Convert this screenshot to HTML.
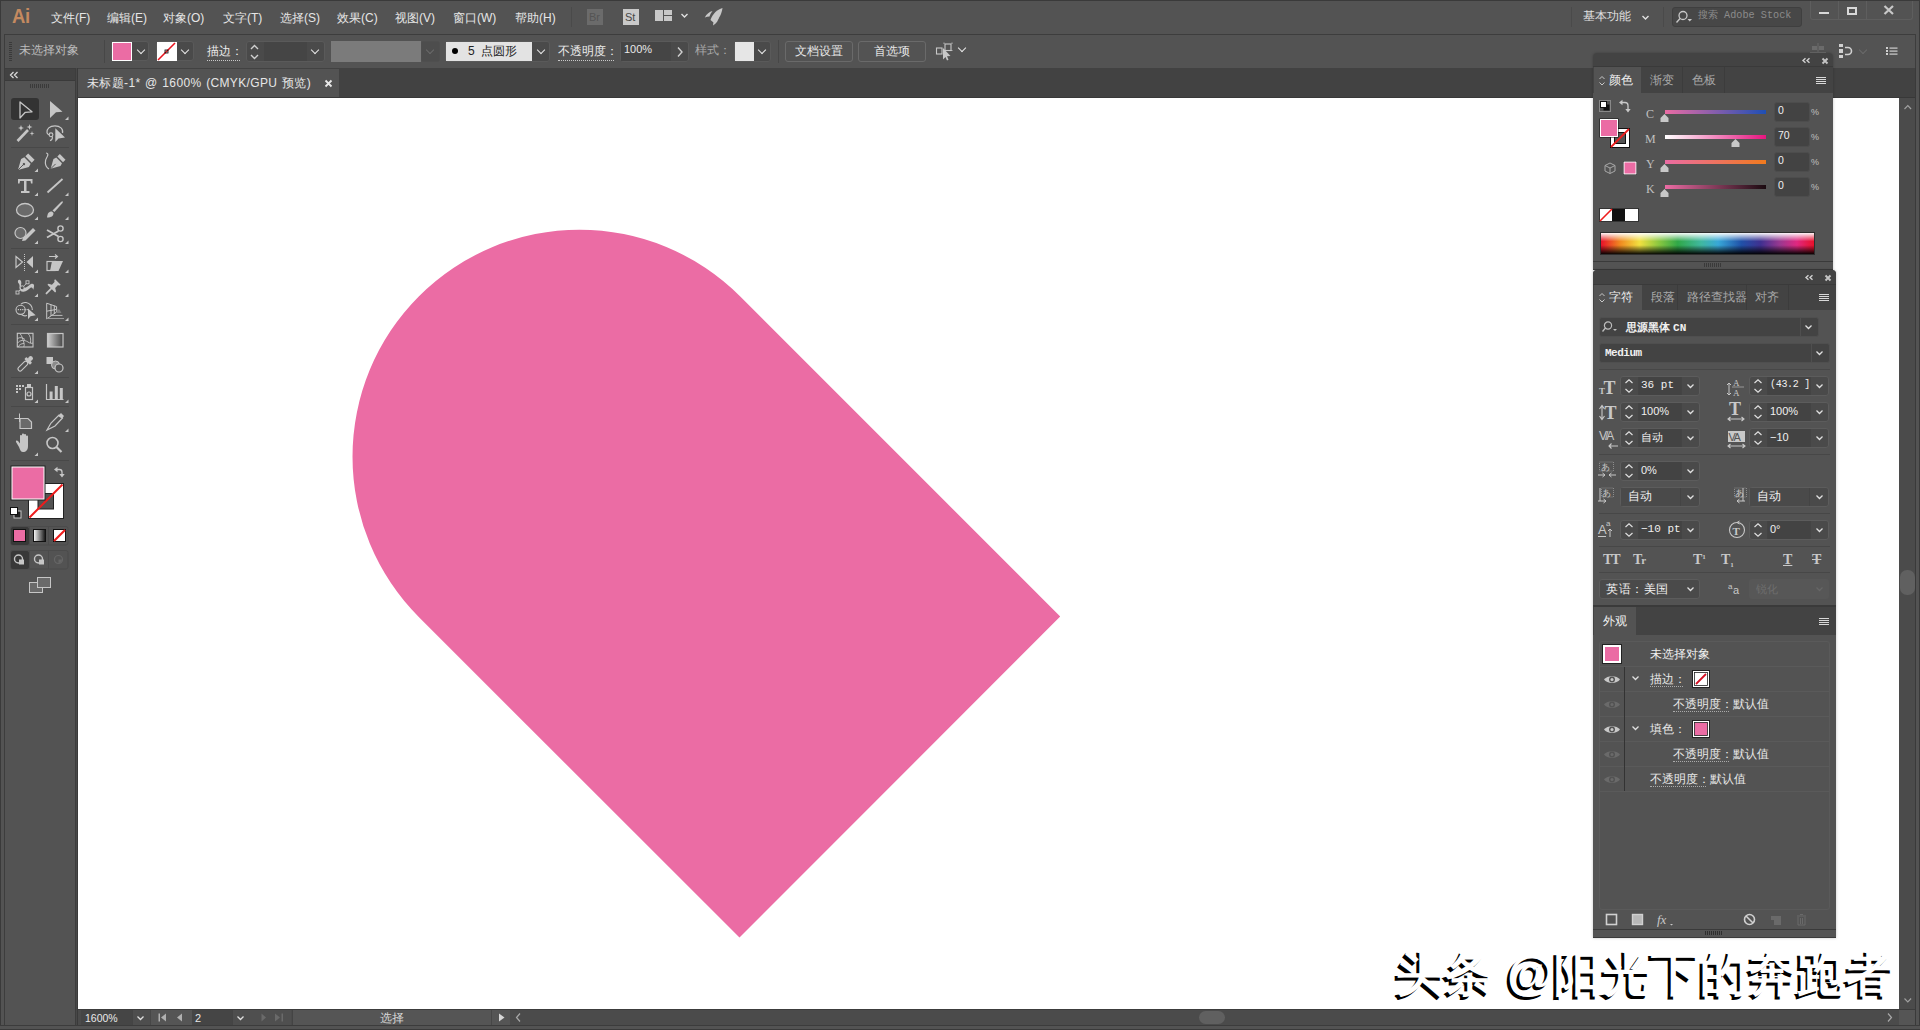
<!DOCTYPE html>
<html><head><meta charset="utf-8">
<style>
*{margin:0;padding:0;box-sizing:border-box}
html,body{width:1920px;height:1030px;overflow:hidden;background:#535353;font-family:"Liberation Sans",sans-serif;color:#d6d6d6;font-size:12px}
.a{position:absolute}
.t{position:absolute;white-space:nowrap;line-height:1}
svg{position:absolute;overflow:visible}
.fld{position:absolute;background:#454545;border:1px solid #5a5a5a;border-radius:3px}
.chev{position:absolute;width:6px;height:6px;border-right:1.5px solid #e6e6e6;border-bottom:1.5px solid #e6e6e6;transform:rotate(45deg)}
</style></head><body>
<!-- window frame -->
<div class="a" style="left:0;top:0;width:1920px;height:1030px;background:#535353;border:1px solid #3a3a3a"></div>

<!-- MENU BAR -->
<div id="menubar">
<div class="t" style="left:12px;top:5px;font-size:21px;font-weight:bold;color:#c48a60;letter-spacing:-0.5px;transform:scaleX(0.88);transform-origin:0 0">Ai</div>
<div class="t" style="left:51px;top:12px;color:#e6e6e6">文件(F)</div>
<div class="t" style="left:107px;top:12px;color:#e6e6e6">编辑(E)</div>
<div class="t" style="left:163px;top:12px;color:#e6e6e6">对象(O)</div>
<div class="t" style="left:223px;top:12px;color:#e6e6e6">文字(T)</div>
<div class="t" style="left:280px;top:12px;color:#e6e6e6">选择(S)</div>
<div class="t" style="left:337px;top:12px;color:#e6e6e6">效果(C)</div>
<div class="t" style="left:395px;top:12px;color:#e6e6e6">视图(V)</div>
<div class="t" style="left:453px;top:12px;color:#e6e6e6">窗口(W)</div>
<div class="t" style="left:515px;top:12px;color:#e6e6e6">帮助(H)</div>
<div class="a" style="left:571px;top:7px;width:1px;height:20px;background:#4a4a4a"></div>
<div class="a" style="left:587px;top:9px;width:16px;height:16px;background:#6b6b6b"></div>
<div class="t" style="left:589px;top:12px;font-size:11px;color:#545454">Br</div>
<div class="a" style="left:623px;top:9px;width:16px;height:16px;background:#c9c9c9"></div>
<div class="t" style="left:625px;top:12px;font-size:11px;color:#474747">St</div>
<div class="a" style="left:655px;top:10px;width:7.5px;height:11px;background:#c8c8c8"></div>
<div class="a" style="left:664px;top:10px;width:8px;height:4.5px;background:#c8c8c8"></div>
<div class="a" style="left:664px;top:16px;width:8px;height:5px;background:#c8c8c8"></div>
<svg style="left:680px;top:12px" width="10" height="8"><path d="M1.5 2 L4.5 5 L7.5 2" fill="none" stroke="#e0e0e0" stroke-width="1.4"/></svg>
<svg style="left:704px;top:7px" width="20" height="20"><path d="M18.5 1 C13 2.5 8.5 7 6.5 13 L9.5 15.5 C14.5 13 17.5 8 18.5 1 Z" fill="#c8c8c8"/><path d="M0.8 10.5 C2.5 7 5.5 4.8 8.5 4 C7 6 6 7.8 5.5 9.5 C4 9.5 2.3 9.8 0.8 10.5 Z" fill="#c8c8c8"/><path d="M9 18.5 C9.2 16.5 9.5 14.5 10 13 C11.8 12.5 13.5 11.5 15 10 C14.5 13 12.5 16.5 9 18.5 Z" fill="#c8c8c8"/></svg>
<div class="a" style="left:1571px;top:7px;width:1px;height:20px;background:#4a4a4a"></div>
<div class="t" style="left:1583px;top:10px;color:#e0e0e0">基本功能</div>
<svg style="left:1641px;top:14px" width="10" height="8"><path d="M1.5 2 L4.5 5 L7.5 2" fill="none" stroke="#e0e0e0" stroke-width="1.4"/></svg>
<div class="a" style="left:1663px;top:7px;width:1px;height:20px;background:#4a4a4a"></div>
<div class="a" style="left:1672px;top:7px;width:130px;height:20px;background:#474747;border:1px solid #3f3f3f;border-radius:3px"></div>
<svg style="left:1675px;top:9px" width="20" height="16"><circle cx="8" cy="6.5" r="4" fill="none" stroke="#c8c8c8" stroke-width="1.3"/><line x1="5" y1="9.5" x2="1.5" y2="13.5" stroke="#c8c8c8" stroke-width="1.4"/><path d="M12.5 10 L17 10 L14.75 12.5 Z" fill="#c8c8c8"/></svg>
<div class="t" style="left:1698px;top:11px;font-size:10.2px;color:#8c8c8c;font-family:'Liberation Mono',monospace">搜索 Adobe Stock</div>
<div class="a" style="left:1810px;top:1px;width:103px;height:19px;border:1px solid #5e5e5e;border-top:none;border-radius:0 0 3px 3px"></div>
<div class="a" style="left:1838px;top:1px;width:1px;height:18px;background:#5e5e5e"></div>
<div class="a" style="left:1866px;top:1px;width:1px;height:18px;background:#5e5e5e"></div>
<div class="a" style="left:1819px;top:12px;width:10px;height:2px;background:#d8d8d8"></div>
<div class="a" style="left:1847px;top:7px;width:10px;height:8px;border:2px solid #d8d8d8"></div>
<svg style="left:1883px;top:5px" width="12" height="10"><path d="M1.5 1 L10 9 M10 1 L1.5 9" stroke="#c8c8c8" stroke-width="2.2"/></svg>
</div>

<!-- CONTROL BAR -->
<div class="a" style="left:4px;top:34px;width:1912px;height:35px;background:#535353;border:1px solid #3d3d3d"></div>
<div class="a" style="left:9px;top:42px;width:3px;height:20px;background:repeating-linear-gradient(#3a3a3a 0 1px,transparent 1px 2px)"></div>
<div class="t" style="left:19px;top:44px;color:#bdbdbd">未选择对象</div>
<div class="a" style="left:104px;top:40px;width:1px;height:23px;background:#474747"></div>
<!-- fill swatch -->
<div class="fld" style="left:111px;top:41px;width:38px;height:20px;background:#4a4a4a"></div>
<div class="a" style="left:112px;top:42px;width:20px;height:19px;background:#fff"></div>
<div class="a" style="left:113px;top:43px;width:18px;height:17px;background:#eb6ca4"></div>
<div class="chev" style="left:138px;top:47px"></div>
<!-- stroke swatch -->
<div class="fld" style="left:156px;top:41px;width:38px;height:20px;background:#4a4a4a"></div>
<div class="a" style="left:157px;top:42px;width:20px;height:19px;background:#fff"></div>
<svg style="left:157px;top:42px" width="20" height="19"><line x1="1" y1="18" x2="18" y2="1" stroke="#e8141e" stroke-width="1.6"/><rect x="8" y="8" width="3" height="3" fill="none" stroke="#000" stroke-width="0.8"/></svg>
<div class="chev" style="left:182px;top:47px"></div>
<div class="t" style="left:207px;top:45px;color:#ececec">描边：</div>
<div class="a" style="left:207px;top:60px;width:33px;height:1px;border-top:1px dotted #c8c8c8"></div>
<div class="fld" style="left:246px;top:41px;width:79px;height:21px;background:#4a4a4a"></div>
<div class="a" style="left:264px;top:42px;width:43px;height:19px;background:#454545"></div>
<svg style="left:249px;top:44px" width="12" height="16"><path d="M2 5 L5.5 1.5 L9 5 M2 11 L5.5 14.5 L9 11" fill="none" stroke="#d0d0d0" stroke-width="1.4"/></svg>
<div class="chev" style="left:312px;top:47px"></div>
<!-- disabled gray -->
<div class="a" style="left:331px;top:41px;width:90px;height:21px;background:#7b7b7b"></div>
<div class="fld" style="left:421px;top:41px;width:19px;height:21px;background:#4d4d4d;border-color:#4f4f4f"></div>
<div class="chev" style="left:427px;top:47px;border-color:#6a6a6a"></div>
<!-- brush -->
<div class="fld" style="left:445px;top:41px;width:105px;height:21px;background:#4a4a4a"></div>
<div class="a" style="left:446px;top:42px;width:86px;height:19px;background:#e3e3e3"></div>
<div class="a" style="left:452px;top:48px;width:6px;height:6px;border-radius:50%;background:#000"></div>
<div class="t" style="left:468px;top:45px;color:#222">5&nbsp; 点圆形</div>
<div class="chev" style="left:538px;top:47px"></div>
<div class="t" style="left:558px;top:45px;color:#ececec">不透明度：</div>
<div class="a" style="left:558px;top:60px;width:56px;height:1px;border-top:1px dotted #c8c8c8"></div>
<div class="fld" style="left:620px;top:41px;width:69px;height:21px;background:#4a4a4a"></div>
<div class="a" style="left:621px;top:42px;width:50px;height:19px;background:#454545"></div>
<div class="t" style="left:624px;top:44px;font-size:11px;color:#e8e8e8">100%</div>
<svg style="left:676px;top:46px" width="8" height="12"><path d="M2 1.5 L6 6 L2 10.5" fill="none" stroke="#d0d0d0" stroke-width="1.4"/></svg>
<div class="t" style="left:695px;top:44px;color:#a8a8a8">样式：</div>
<div class="fld" style="left:734px;top:41px;width:37px;height:21px;background:#4a4a4a"></div>
<div class="a" style="left:735px;top:42px;width:19px;height:19px;background:#e6e6e6"></div>
<div class="chev" style="left:759px;top:47px"></div>
<div class="a" style="left:778px;top:40px;width:1px;height:23px;background:#474747"></div>
<div class="a" style="left:785px;top:41px;width:68px;height:21px;border:1px solid #6a6a6a;border-radius:3px"></div>
<div class="t" style="left:795px;top:45px;color:#e6e6e6">文档设置</div>
<div class="a" style="left:858px;top:41px;width:68px;height:21px;border:1px solid #6a6a6a;border-radius:3px"></div>
<div class="t" style="left:874px;top:45px;color:#e6e6e6">首选项</div>
<svg style="left:934px;top:42px" width="24" height="20"><rect x="2.5" y="6" width="5.5" height="6" fill="none" stroke="#c8c8c8" stroke-width="1.1"/><rect x="11" y="2" width="6" height="6.5" fill="none" stroke="#c8c8c8" stroke-width="1.1"/><path d="M10 0.5 V2 M18 0.5 V2 M9.5 8.5 H11 M17 8.5 H18.5" stroke="#c8c8c8" stroke-width="0.8"/><path d="M9 6 L9 17.5 L11.5 15 L13 18.5 L14.5 17.8 L13 14.3 L16.5 14 Z" fill="#c8c8c8"/></svg>
<div class="chev" style="left:959px;top:45px"></div>
<!-- right side icons -->
<svg style="left:1810px;top:43px" width="18" height="18"><rect x="2" y="3" width="5" height="4" fill="#6b6b6b"/><rect x="9" y="3" width="5" height="4" fill="#6b6b6b"/><line x1="0" y1="9.5" x2="16" y2="9.5" stroke="#6b6b6b"/><line x1="8" y1="0" x2="8" y2="13" stroke="#6b6b6b"/></svg>
<svg style="left:1838px;top:43px" width="18" height="18"><rect x="1" y="1" width="4" height="3" fill="#d0d0d0"/><rect x="1" y="6" width="4" height="4" fill="#d0d0d0"/><rect x="1" y="12" width="4" height="3" fill="#d0d0d0"/><path d="M7 4.5 H10 A3.5 3.5 0 0 1 10 11.5 H7" fill="none" stroke="#d0d0d0" stroke-width="1.6"/></svg>
<div class="chev" style="left:1860px;top:47px;border-color:#6a6a6a"></div>
<svg style="left:1886px;top:47px" width="14" height="10"><g fill="#d0d0d0"><rect x="0" y="0" width="2" height="2"/><rect x="0" y="3" width="2" height="2"/><rect x="0" y="6" width="2" height="2"/><rect x="3.5" y="0.5" width="8" height="1.2"/><rect x="3.5" y="3.5" width="8" height="1.2"/><rect x="3.5" y="6.5" width="8" height="1.2"/></g></svg>

<!-- DOC TAB AREA -->
<div class="a" style="left:78px;top:68px;width:1838px;height:30px;background:#424242;border-bottom:1px solid #383838"></div>
<div class="a" style="left:78px;top:69px;width:261px;height:28px;background:#535353"></div>
<div class="t" style="left:87px;top:77px;color:#e6e6e6;letter-spacing:0.35px;word-spacing:1px">未标题-1* @ 1600% (CMYK/GPU 预览)</div>
<svg style="left:324px;top:79px" width="9" height="9"><path d="M1.5 1.5 L7.5 7.5 M7.5 1.5 L1.5 7.5" stroke="#e8e8e8" stroke-width="1.8"/></svg>

<!-- TOOLBAR -->
<div class="a" style="left:4px;top:68px;width:72px;height:958px;background:#535353;border:1px solid #3d3d3d"></div>
<div class="a" style="left:5px;top:69px;width:70px;height:12px;background:#424242;border-bottom:1px solid #3a3a3a"></div>
<div class="a" style="left:76px;top:68px;width:2px;height:958px;background:#484848;border-right:1px solid #3a3a3a"></div>
<svg style="left:9px;top:71px" width="10" height="8"><path d="M4.5 1 L1.5 4 L4.5 7 M8.5 1 L5.5 4 L8.5 7" fill="none" stroke="#d8d8d8" stroke-width="1.3"/></svg>
<div class="a" style="left:30px;top:84px;width:19px;height:4px;background:repeating-linear-gradient(90deg,#3a3a3a 0 1px,transparent 1px 2px)"></div>
<div class="a" style="left:11px;top:98px;width:28px;height:22px;background:#333333;border-radius:3px"></div>
<svg style="left:0;top:0" width="80" height="600">
<g fill="#c6c6c6" stroke="none">
<!-- corner triangles -->
<path d="M65.0 120.0 L68.5 120.0 L68.5 116.5 Z"/>
<path d="M34.5 172.0 L38.0 172.0 L38.0 168.5 Z"/>
<path d="M34.5 196.0 L38.0 196.0 L38.0 192.5 Z"/><path d="M65.0 196.0 L68.5 196.0 L68.5 192.5 Z"/>
<path d="M34.5 220.0 L38.0 220.0 L38.0 216.5 Z"/><path d="M65.0 220.0 L68.5 220.0 L68.5 216.5 Z"/>
<path d="M34.5 244.0 L38.0 244.0 L38.0 240.5 Z"/><path d="M65.0 244.0 L68.5 244.0 L68.5 240.5 Z"/>
<path d="M34.5 273.0 L38.0 273.0 L38.0 269.5 Z"/><path d="M65.0 273.0 L68.5 273.0 L68.5 269.5 Z"/>
<path d="M34.5 297.0 L38.0 297.0 L38.0 293.5 Z"/><path d="M65.0 297.0 L68.5 297.0 L68.5 293.5 Z"/>
<path d="M34.5 321.0 L38.0 321.0 L38.0 317.5 Z"/><path d="M65.0 321.0 L68.5 321.0 L68.5 317.5 Z"/>
<path d="M34.5 374.0 L38.0 374.0 L38.0 370.5 Z"/>
<path d="M34.5 403.0 L38.0 403.0 L38.0 399.5 Z"/><path d="M65.0 403.0 L68.5 403.0 L68.5 399.5 Z"/>
<path d="M65.0 432.0 L68.5 432.0 L68.5 428.5 Z"/>
<path d="M34.5 456.0 L38.0 456.0 L38.0 452.5 Z"/>
</g>
<!-- separators -->
<g stroke="#484848" stroke-width="1">
<line x1="11" y1="147.5" x2="69" y2="147.5"/><line x1="11" y1="248.5" x2="69" y2="248.5"/>
<line x1="11" y1="324.5" x2="69" y2="324.5"/><line x1="11" y1="377.5" x2="69" y2="377.5"/>
<line x1="11" y1="406.5" x2="69" y2="406.5"/><line x1="11" y1="460.5" x2="69" y2="460.5"/>
</g>
<!-- row1 -->
<path d="M20 102 L32 111.8 L25.3 112.3 L20 118 Z" fill="none" stroke="#c6c6c6" stroke-width="1.3" stroke-linejoin="round"/>
<path d="M50 101 L62.5 111.7 L56 112.2 L50 118 Z" fill="#c6c6c6"/>
<!-- row2 wand -->
<line x1="17.5" y1="141" x2="28" y2="130" stroke="#c6c6c6" stroke-width="2.6"/>
<g fill="#c6c6c6"><path d="M21 125 L21.8 127.3 L24 128 L21.8 128.7 L21 131 L20.2 128.7 L18 128 L20.2 127.3 Z"/><path d="M29.5 124 L30.2 126.3 L32.5 127 L30.2 127.7 L29.5 130 L28.8 127.7 L26.5 127 L28.8 126.3 Z"/><path d="M32 131 L32.6 132.9 L34.5 133.5 L32.6 134.1 L32 136 L31.4 134.1 L29.5 133.5 L31.4 132.9 Z"/></g>
<!-- lasso -->
<path d="M62.5 133 C63.5 129 60 125.8 55 125.8 C49.5 125.8 46.5 129 47 132.5 C47.3 134 48.3 134.8 49.5 134.8" fill="none" stroke="#c6c6c6" stroke-width="1.2"/>
<circle cx="51" cy="134.8" r="1.9" fill="none" stroke="#c6c6c6" stroke-width="1.1"/><path d="M52.2 136.3 C52.8 138.5 51.5 140 50 140.6" fill="none" stroke="#c6c6c6" stroke-width="1.2"/>
<path d="M55.3 128.3 L55.3 142 L58.5 138.5 L65 137.4 Z" fill="#c6c6c6"/>
<!-- row3 pen -->
<g transform="translate(25 163) rotate(45)">
<path d="M0 10 L-5.5 0 L-4.5 -3.5 L4.5 -3.5 L5.5 0 Z" fill="#c6c6c6"/>
<rect x="-4.5" y="-9" width="9" height="4" fill="#c6c6c6"/>
<line x1="0" y1="10" x2="0" y2="2" stroke="#535353" stroke-width="0.9"/>
<circle cx="0" cy="1.5" r="1.2" fill="#535353"/>
</g>
<g transform="translate(57 162.5) rotate(45)">
<path d="M0 9 L-5 0 L-4 -3 L4 -3 L5 0 Z" fill="#c6c6c6"/>
<rect x="-4" y="-8" width="8" height="3.5" fill="#c6c6c6"/>
<line x1="0" y1="9" x2="0" y2="2" stroke="#535353" stroke-width="0.9"/>
</g>
<path d="M49 169 C44 166 45 160 47 157 C48.5 154.5 48 153 46 153" fill="none" stroke="#c6c6c6" stroke-width="1.2"/>
<!-- row4 T -->
<path d="M18 179 H32.5 V183.5 H31 L30.5 181 H26.5 V191 H29.5 V193 H21 V191 H24 V181 H20 L19.5 183.5 H18 Z" fill="#c6c6c6"/>
<line x1="47.5" y1="192.5" x2="62.5" y2="179" stroke="#c6c6c6" stroke-width="1.8"/>
<!-- row5 ellipse -->
<ellipse cx="25" cy="210" rx="8.5" ry="6.5" fill="#6a6a6a" stroke="#c6c6c6" stroke-width="1.3"/>
<path d="M47 217.5 C47.5 213 49 211.5 52 211.5 L53.5 213 C53.5 216 51.5 217.5 47 217.5 Z" fill="#c6c6c6"/>
<path d="M52.5 210.5 L61 202 C62.5 200.5 63.5 201.5 62.5 203 L54.5 212 Z" fill="#c6c6c6"/>
<!-- row6 shaper -->
<circle cx="20.5" cy="233" r="5.5" fill="#6a6a6a" stroke="#c6c6c6" stroke-width="1.2"/>
<path d="M22 241 L23 238 L33 228 L35.5 230.5 L25.5 240.5 Z" fill="#c6c6c6"/>
<g fill="none" stroke="#c6c6c6" stroke-width="1.4"><circle cx="60.5" cy="228.5" r="2.6"/><circle cx="60.5" cy="239" r="2.6"/></g>
<path d="M47 230 L58.5 236.5 M47 237.5 L58.5 231" stroke="#c6c6c6" stroke-width="1.8"/>
<!-- row7 reflect -->
<path d="M16 256.5 L22.5 262 L16 267.5 Z" fill="none" stroke="#c6c6c6" stroke-width="1.2"/>
<line x1="24.5" y1="254" x2="24.5" y2="271" stroke="#c6c6c6" stroke-width="1" stroke-dasharray="1 1"/>
<path d="M33 256 L26.5 262 L33 268 Z" fill="#c6c6c6"/>
<rect x="47" y="261.5" width="8" height="9" fill="none" stroke="#c6c6c6" stroke-width="1.2"/>
<path d="M52 261 H63 L58.5 271 H50 Z" fill="#c6c6c6"/>
<path d="M49 256.5 H57 M55 254.5 L57.5 256.5 L55 258.5" fill="none" stroke="#c6c6c6" stroke-width="1.1"/>
<!-- row8 puppet -->
<path d="M18 282.5 C17.5 280 19 279.5 20 280 C21.5 280.8 21.5 283 21 285 C20.8 287 22 288.5 24.5 288 C27 287.5 29 285 31 284 C33 283 34.5 284.5 34 286.5 C33.8 288 33.5 289 33.2 289.8 C32.8 288 32 286.8 30.5 287.8 C28.5 289.5 26.5 291.5 23.5 291.8 C21 292 19.5 290.5 19.5 288 C19.5 286 20 284.5 18 282.5 Z" fill="#c6c6c6"/>
<line x1="17.5" y1="292.5" x2="27.5" y2="282.3" stroke="#c6c6c6" stroke-width="0.9"/>
<circle cx="22.2" cy="287.8" r="2" fill="#535353" stroke="#c6c6c6" stroke-width="1"/>
<rect x="26" y="280.8" width="3" height="3" fill="#535353" stroke="#c6c6c6" stroke-width="0.9"/>
<rect x="16" y="291" width="3" height="3" fill="#535353" stroke="#c6c6c6" stroke-width="0.9"/>
<g transform="translate(51.7 288.2) rotate(45)"><path d="M-5.4 0.6 L5.4 0.6 L5.4 -0.8 L2.3 -2.6 L2.3 -6.3 L3.9 -7.6 L3.9 -8.8 L-3.9 -8.8 L-3.9 -7.6 L-2.3 -6.3 L-2.3 -2.6 L-5.4 -0.8 Z" fill="#c6c6c6"/><line x1="0" y1="0" x2="0" y2="7.4" stroke="#c6c6c6" stroke-width="1.8" stroke-linecap="round"/></g>
<!-- row9 shape builder -->
<circle cx="20.6" cy="309.8" r="4.6" fill="none" stroke="#c6c6c6" stroke-width="1.1"/>
<path d="M21 304.2 C22.5 302.5 24.5 302.3 26 302.5 C30 303 32.5 306.5 32.3 310" fill="none" stroke="#c6c6c6" stroke-width="1.1"/>
<path d="M21.5 314.5 C23 315.8 25.5 316 27 315.5" fill="none" stroke="#c6c6c6" stroke-width="1.1"/>
<g fill="#c6c6c6"><rect x="17.8" y="309" width="1.2" height="1.2"/><rect x="20" y="309" width="1.2" height="1.2"/><rect x="22.2" y="309" width="1.2" height="1.2"/><rect x="24.4" y="309" width="1.2" height="1.2"/><rect x="26.6" y="309" width="1.2" height="1.2"/></g>
<path d="M28 308.5 L28 319.2 L30.5 316.2 L35.7 315.3 Z" fill="#c6c6c6"/>
<path d="M46.7 303.2 V318.9 L56.6 312 V306.6 Z M51 304.6 V316 M54.3 305.7 V313.6 M46.7 311.2 L56.6 309.4" fill="none" stroke="#c6c6c6" stroke-width="1"/>
<path d="M56.6 309.5 L59.5 309.5 L61.5 313 L56.6 313 Z" fill="#7c7c7c"/>
<line x1="52" y1="315.4" x2="62.5" y2="315.4" stroke="#c6c6c6" stroke-width="0.9"/>
<line x1="47" y1="318.5" x2="64" y2="318.5" stroke="#9a9a9a" stroke-width="1"/>
<!-- row10 mesh -->
<rect x="17.3" y="333.3" width="15.7" height="13.7" fill="none" stroke="#c6c6c6" stroke-width="1.1"/>
<path d="M17.5 343 C20 340 24 339.5 28 342 C30 343.5 32 343.5 33 343 M20 333.5 C22 336 23 339.5 24 343 C24.5 345 24 346.5 23.5 347 M28 333.5 C30.5 336 31 339 30.5 343 M17.5 338.5 C20 337 22.5 337.5 25 339.5 M18 347 C19 345 21 343.5 24 343.5" fill="none" stroke="#c6c6c6" stroke-width="0.9"/>
<defs><linearGradient id="g1" x1="0" x2="1"><stop offset="0" stop-color="#cfcfcf"/><stop offset="1" stop-color="#454545"/></linearGradient></defs>
<rect x="47.5" y="333.5" width="15.5" height="13.5" fill="url(#g1)" stroke="#c6c6c6" stroke-width="1.2"/>
<!-- row11 eyedropper -->
<g transform="translate(25 364) rotate(45)"><rect x="-2.1" y="-3" width="4.2" height="12" rx="2.1" fill="none" stroke="#c6c6c6" stroke-width="1.1"/><rect x="-4" y="-6" width="8" height="3" rx="0.8" fill="#c6c6c6"/><rect x="-2.3" y="-10.3" width="4.6" height="5" rx="2.3" fill="#c6c6c6"/></g>
<rect x="46.5" y="357" width="6.5" height="7" fill="#c6c6c6"/>
<circle cx="55.5" cy="365" r="4" fill="#8a8a8a" stroke="#c6c6c6" stroke-width="1"/>
<circle cx="59" cy="368" r="4" fill="#535353" stroke="#c6c6c6" stroke-width="1.2"/>
<!-- row12 symbol sprayer -->
<g fill="#c6c6c6"><rect x="16" y="385" width="2" height="2"/><rect x="19" y="385" width="2" height="2"/><rect x="22" y="385" width="2" height="2"/><rect x="16" y="388" width="2" height="2"/><rect x="19" y="388" width="2" height="2"/><rect x="16" y="391" width="2" height="2"/><rect x="27" y="384" width="4" height="3"/></g>
<rect x="25.5" y="387.5" width="7" height="12" fill="none" stroke="#c6c6c6" stroke-width="1.2"/>
<circle cx="29" cy="394" r="2" fill="none" stroke="#c6c6c6" stroke-width="1.2"/>
<path d="M46.5 384 V399.5 H63.5" fill="none" stroke="#c6c6c6" stroke-width="1.2"/>
<g fill="#c6c6c6"><rect x="49.6" y="391.5" width="3" height="8"/><rect x="54.8" y="386" width="3" height="13.5"/><rect x="59.8" y="388" width="3" height="11.5"/></g>
<!-- row13 artboard -->
<path d="M14.5 418.5 H23 M19.5 413.5 V422" stroke="#c6c6c6" stroke-width="1"/>
<path d="M20 418.5 H28 L31.5 422 V428.5 H20 Z" fill="#6a6a6a" stroke="#c6c6c6" stroke-width="1.2"/>
<path d="M47 430 L51 423 L59 415 L62.5 418 L55 426 Z" fill="none" stroke="#c6c6c6" stroke-width="1.2"/>
<path d="M58 416 L61 413 L64 416 L62 418.5 Z" fill="#c6c6c6"/>
<!-- row14 hand -->
<path d="M19 447 L16 442 C15.5 440.5 17 440 18 441 L20 443.5 V436 C20 434.8 22 434.8 22 436 V441 V434.5 C22 433.2 24 433.2 24 434.5 V441 V435 C24 433.8 26 433.8 26 435 V441 V436.5 C26 435.3 28 435.3 28 436.5 V446 C28 450 26 452 23 452 C21 452 20 450 19 447 Z" fill="#c6c6c6"/>
<circle cx="52.5" cy="443" r="5.5" fill="none" stroke="#c6c6c6" stroke-width="1.6"/>
<line x1="56.5" y1="447" x2="61.5" y2="452" stroke="#c6c6c6" stroke-width="2.2"/>
<!-- fill/stroke -->
<rect x="28.5" y="483.5" width="35" height="35" fill="#fff" stroke="#222" stroke-width="1"/>
<rect x="38" y="493.5" width="15.5" height="15.5" fill="#535353" stroke="#222" stroke-width="1"/>
<line x1="29.5" y1="517.5" x2="62.5" y2="484.5" stroke="#ee1c1c" stroke-width="2"/>
<rect x="10.5" y="465.5" width="35" height="35" fill="#222"/>
<rect x="11.5" y="466.5" width="33" height="33" fill="#fff"/>
<rect x="12.5" y="467.5" width="31" height="31" fill="#eb6ca4"/>
<path d="M57 469.5 H59.5 Q62 469.5 62 472 V474.5" fill="none" stroke="#c6c6c6" stroke-width="1.3"/><path d="M54 469.5 L57.5 466.8 V472.2 Z M62 477.5 L59.3 474 H64.7 Z" fill="#c6c6c6"/>
<rect x="14" y="511" width="7" height="7" fill="#222" stroke="#c6c6c6" stroke-width="1"/>
<rect x="10.5" y="507.5" width="7" height="7" fill="#fff" stroke="#111" stroke-width="1"/>
<!-- color mode -->
<rect x="10.5" y="526.5" width="57.5" height="18.5" rx="2" fill="none" stroke="#4b4b4b" stroke-width="1"/>
<rect x="11" y="527" width="18" height="18" rx="2" fill="#383838"/>
<line x1="48.5" y1="527" x2="48.5" y2="545" stroke="#4b4b4b"/>
<line x1="29.5" y1="527" x2="29.5" y2="545" stroke="#4b4b4b"/>
<rect x="13.5" y="529.5" width="12" height="12" fill="#eb6ca4" stroke="#111" stroke-width="1"/>
<defs><linearGradient id="g2" x1="0" x2="1"><stop offset="0" stop-color="#fff"/><stop offset="1" stop-color="#111"/></linearGradient></defs>
<rect x="33.5" y="529.5" width="12" height="12" fill="url(#g2)" stroke="#111" stroke-width="1"/>
<rect x="53.5" y="529.5" width="12" height="12" fill="#fff" stroke="#111" stroke-width="1"/>
<line x1="54" y1="541" x2="65" y2="530" stroke="#ee1c1c" stroke-width="2.2"/>
<!-- draw mode -->
<rect x="10.5" y="550.5" width="57.5" height="18.5" rx="2" fill="none" stroke="#4b4b4b" stroke-width="1"/>
<rect x="11" y="551" width="18" height="18" rx="2" fill="#383838"/>
<line x1="48.5" y1="551" x2="48.5" y2="569" stroke="#4b4b4b"/>
<line x1="29.5" y1="551" x2="29.5" y2="569" stroke="#4b4b4b"/>
<circle cx="18.5" cy="559" r="4" fill="none" stroke="#c6c6c6" stroke-width="1.4"/><rect x="19" y="559.5" width="5" height="5" fill="#c6c6c6"/>
<circle cx="38.5" cy="559" r="4" fill="none" stroke="#c6c6c6" stroke-width="1.4"/><rect x="39" y="559.5" width="5" height="5" fill="#c6c6c6"/>
<circle cx="58.5" cy="559.5" r="4" fill="none" stroke="#666" stroke-width="1.2"/><path d="M58.5 559.5 H62 A3.5 3.5 0 0 1 58.5 563 Z" fill="#666"/>
<!-- screen mode -->
<rect x="29.5" y="582.5" width="13" height="10" fill="#6a6a6a" stroke="#c6c6c6" stroke-width="1"/>
<rect x="37.5" y="577.5" width="13" height="10" fill="#6a6a6a" stroke="#c6c6c6" stroke-width="1"/>
</svg>

<!-- CANVAS -->
<div class="a" style="left:78px;top:98px;width:1821px;height:911px;background:#fff"></div>
<svg width="1920" height="1030" style="left:0;top:0">
<path d="M740 296.2 L1060.2 616.5 L739.5 937.6 L419 617.2 A200 200 0 0 1 740 296.2 Z" fill="#eb6ca4"/>
</svg>

<!-- RIGHT SCROLLBAR -->
<div class="a" style="left:1899px;top:98px;width:16px;height:911px;background:#4b4b4b"></div>
<svg style="left:1903px;top:104px" width="10" height="8"><path d="M1.5 5 L4.8 1.7 L8.1 5" fill="none" stroke="#a0a0a0" stroke-width="1.2"/></svg>
<div class="a" style="left:1900px;top:570px;width:15px;height:25px;background:#606060;border-radius:7px"></div>
<svg style="left:1903px;top:997px" width="10" height="8"><path d="M1.5 1.5 L4.8 4.8 L8.1 1.5" fill="none" stroke="#a0a0a0" stroke-width="1.2"/></svg>
<div class="a" style="left:1915px;top:68px;width:1px;height:958px;background:#3a3a3a"></div>
<!-- STATUS BAR -->
<div class="a" style="left:78px;top:1009px;width:1837px;height:17px;background:#4b4b4b;border-top:1px solid #3c3c3c;border-bottom:1px solid #3c3c3c"></div>
<div class="a" style="left:81px;top:1010px;width:51px;height:15px;background:#454545"></div>
<div class="t" style="left:85px;top:1013px;font-size:10.5px;color:#e8e8e8">1600%</div>
<div class="a" style="left:132px;top:1010px;width:18px;height:15px;background:#4e4e4e;border-left:1px solid #444"></div>
<svg style="left:136px;top:1015px" width="10" height="8"><path d="M1.5 1.5 L4.5 4.5 L7.5 1.5" fill="none" stroke="#e0e0e0" stroke-width="1.3"/></svg>
<div class="a" style="left:150px;top:1010px;width:42px;height:15px;background:#555;border-left:1px solid #474747"></div>
<svg style="left:157px;top:1012px" width="30" height="12"><rect x="1.5" y="1.5" width="1.5" height="8" fill="#b0b0b0"/><path d="M9 1.5 L4 5.5 L9 9.5 Z M25 1.5 L20 5.5 L25 9.5 Z" fill="#b0b0b0"/></svg>
<div class="a" style="left:192px;top:1010px;width:40px;height:15px;background:#454545"></div>
<div class="t" style="left:195px;top:1013px;font-size:11px;color:#e8e8e8">2</div>
<div class="a" style="left:232px;top:1010px;width:18px;height:15px;background:#4e4e4e;border-left:1px solid #444"></div>
<svg style="left:236px;top:1015px" width="10" height="8"><path d="M1.5 1.5 L4.5 4.5 L7.5 1.5" fill="none" stroke="#e0e0e0" stroke-width="1.3"/></svg>
<div class="a" style="left:250px;top:1010px;width:41px;height:15px;background:#4f4f4f"></div>
<svg style="left:258px;top:1012px" width="30" height="12"><path d="M3.5 1.5 L8 5.5 L3.5 9.5 Z M17 1.5 L22 5.5 L17 9.5 Z" fill="#6a6a6a"/><rect x="23.5" y="1.5" width="1.5" height="8" fill="#6a6a6a"/></svg>
<div class="a" style="left:292px;top:1010px;width:1px;height:15px;background:#444"></div>
<div class="a" style="left:293px;top:1010px;width:198px;height:15px;background:#555"></div>
<div class="t" style="left:380px;top:1012px;font-size:12px;color:#d8d8d8">选择</div>
<div class="a" style="left:491px;top:1010px;width:19px;height:15px;background:#555;border-left:1px solid #474747"></div>
<svg style="left:497px;top:1012px" width="10" height="12"><path d="M2 1.5 L7.5 5.5 L2 9.5 Z" fill="#d8d8d8"/></svg>
<svg style="left:514px;top:1012px" width="10" height="12"><path d="M6 1.5 L2.5 5.5 L6 9.5" fill="none" stroke="#a8a8a8" stroke-width="1.2"/></svg>
<div class="a" style="left:1199px;top:1011px;width:26px;height:13px;background:#606060;border-radius:7px"></div>
<svg style="left:1885px;top:1012px" width="10" height="12"><path d="M3 1.5 L6.5 5.5 L3 9.5" fill="none" stroke="#a8a8a8" stroke-width="1.2"/></svg>
<div class="a" style="left:1899px;top:1010px;width:16px;height:15px;background:#555"></div>
<div class="a" style="left:0;top:1025px;width:1920px;height:5px;background:#535353;border-top:1px solid #3c3c3c;border-bottom:1px solid #3a3a3a"></div>
<!-- watermark -->
<div class="t" style="left:1396px;top:950px;font-size:48px;color:#fff;font-weight:900;letter-spacing:0.55px;text-shadow:-3px 3px 0.5px #000">头条 @阳光下的奔跑者</div>

<!-- PANELS -->
<!-- COLOR PANEL -->
<div class="a" style="left:1593px;top:53px;width:240px;height:217px;background:#535353;border-radius:4px 4px 0 0;box-shadow:0 0 3px rgba(0,0,0,0.25)"></div>
<div class="a" style="left:1593px;top:53px;width:240px;height:40px;background:#434343;border-radius:4px 4px 0 0"></div>
<div class="a" style="left:1593px;top:66px;width:240px;height:1px;background:#3a3a3a"></div>
<svg style="left:1801px;top:57px" width="12" height="8"><path d="M4.5 1.2 L2 3.5 L4.5 5.8 M8.5 1.2 L6 3.5 L8.5 5.8" fill="none" stroke="#d0d0d0" stroke-width="1.4"/></svg>
<svg style="left:1821px;top:57px" width="9" height="9"><path d="M1.5 1.5 L6.5 6.5 M6.5 1.5 L1.5 6.5" stroke="#c4c4c4" stroke-width="1.9"/></svg>
<div class="a" style="left:1594px;top:67px;width:47px;height:26px;background:#535353"></div>
<div class="a" style="left:1682px;top:67px;width:1px;height:26px;background:#3c3c3c"></div>
<div class="a" style="left:1724px;top:67px;width:1px;height:26px;background:#3c3c3c"></div>
<svg style="left:1598px;top:75px" width="8" height="12"><path d="M1.5 4 L4 1.5 L6.5 4 M1.5 7.5 L4 10 L6.5 7.5" fill="none" stroke="#c8c8c8" stroke-width="1"/></svg>
<div class="t" style="left:1609px;top:74px;color:#f0f0f0">颜色</div>
<div class="t" style="left:1650px;top:74px;color:#a8a8a8">渐变</div>
<div class="t" style="left:1692px;top:74px;color:#a8a8a8">色板</div>
<svg style="left:1816px;top:77px" width="11" height="8"><g fill="#d8d8d8"><rect y="0" width="10" height="1"/><rect y="2" width="10" height="1"/><rect y="4" width="10" height="1"/><rect y="6" width="10" height="1"/></g></svg>
<!-- color panel body -->
<svg style="left:1598px;top:99px" width="40" height="82">
<rect x="1.5" y="1.5" width="11" height="11" fill="#535353" stroke="#888" stroke-width="1"/>
<rect x="5.5" y="5.5" width="6" height="6" fill="#111" />
<rect x="2.5" y="2.5" width="6" height="6" fill="#fff" stroke="#111" stroke-width="1"/>
<path d="M24 3.5 H27 Q30 3.5 30 6.5 V11" fill="none" stroke="#c8c8c8" stroke-width="1.3"/><path d="M21 3.5 L24.5 0.8 V6.2 Z M30 13.5 L27.3 10 H32.7 Z" fill="#c8c8c8"/>
<rect x="12.5" y="29.5" width="19" height="19" fill="#fff" stroke="#111" stroke-width="1"/>
<rect x="16.5" y="33.5" width="11" height="11" fill="#535353" stroke="#111" stroke-width="1"/>
<line x1="13" y1="48" x2="31" y2="30" stroke="#ee1c1c" stroke-width="1.8"/>
<rect x="1.5" y="19.5" width="19" height="19" fill="#111"/>
<rect x="2" y="20" width="18" height="18" fill="#fff"/>
<rect x="3" y="21" width="16" height="16" fill="#eb6ca4"/>
<path d="M12 64 L17 66.5 V72 L12 74.5 L7 72 V66.5 Z M7 66.5 L12 69 L17 66.5 M12 69 V74.5" fill="none" stroke="#a8a8a8" stroke-width="1"/>
<rect x="25" y="62" width="14" height="14" fill="#111"/>
<rect x="25.5" y="62.5" width="13" height="13" fill="#fff"/>
<rect x="26.5" y="63.5" width="11" height="11" fill="#eb6ca4"/>
</svg>
<div class="t" style="left:1646px;top:108px;font-family:'Liberation Serif',serif;font-size:12px;color:#c0c0c0">C</div>
<div class="t" style="left:1645px;top:133px;font-family:'Liberation Serif',serif;font-size:12px;color:#c0c0c0">M</div>
<div class="t" style="left:1646px;top:158px;font-family:'Liberation Serif',serif;font-size:12px;color:#c0c0c0">Y</div>
<div class="t" style="left:1646px;top:183px;font-family:'Liberation Serif',serif;font-size:12px;color:#c0c0c0">K</div>
<div class="a" style="left:1665px;top:110px;width:101px;height:4px;background:linear-gradient(90deg,#eb6ca4,#1e4fb4)"></div>
<div class="a" style="left:1665px;top:135px;width:101px;height:4px;background:linear-gradient(90deg,#fff,#e6157f)"></div>
<div class="a" style="left:1665px;top:160px;width:101px;height:4px;background:linear-gradient(90deg,#eb6ca4,#f07a1e)"></div>
<div class="a" style="left:1665px;top:185px;width:101px;height:4px;background:linear-gradient(90deg,#eb6ca4,#1a0a10)"></div>
<svg style="left:1658px;top:113px" width="14" height="10"><path d="M2.5 9 V5 L6.5 1 L10.5 5 V9 Z" fill="#c8c8c8"/></svg>
<svg style="left:1729px;top:138px" width="14" height="10"><path d="M2.5 9 V5 L6.5 1 L10.5 5 V9 Z" fill="#c8c8c8"/></svg>
<svg style="left:1658px;top:163px" width="14" height="10"><path d="M2.5 9 V5 L6.5 1 L10.5 5 V9 Z" fill="#c8c8c8"/></svg>
<svg style="left:1658px;top:188px" width="14" height="10"><path d="M2.5 9 V5 L6.5 1 L10.5 5 V9 Z" fill="#c8c8c8"/></svg>
<div class="fld" style="left:1774px;top:102px;width:36px;height:20px;background:#434343;border-color:#4d4d4d;border-radius:3px"></div>
<div class="fld" style="left:1774px;top:127px;width:36px;height:20px;background:#434343;border-color:#4d4d4d;border-radius:3px"></div>
<div class="fld" style="left:1774px;top:152px;width:36px;height:20px;background:#434343;border-color:#4d4d4d;border-radius:3px"></div>
<div class="fld" style="left:1774px;top:177px;width:36px;height:20px;background:#434343;border-color:#4d4d4d;border-radius:3px"></div>
<div class="t" style="left:1778px;top:105px;font-size:10.5px;color:#f0f0f0">0</div>
<div class="t" style="left:1778px;top:130px;font-size:10.5px;color:#f0f0f0">70</div>
<div class="t" style="left:1778px;top:155px;font-size:10.5px;color:#f0f0f0">0</div>
<div class="t" style="left:1778px;top:180px;font-size:10.5px;color:#f0f0f0">0</div>
<div class="t" style="left:1811px;top:108px;font-size:9px;color:#c0c0c0">%</div>
<div class="t" style="left:1811px;top:133px;font-size:9px;color:#c0c0c0">%</div>
<div class="t" style="left:1811px;top:158px;font-size:9px;color:#c0c0c0">%</div>
<div class="t" style="left:1811px;top:183px;font-size:9px;color:#c0c0c0">%</div>
<svg style="left:1599px;top:208px" width="40" height="14"><rect x="0.5" y="0.5" width="39" height="13" fill="#fff" stroke="#333" stroke-width="1"/><rect x="13" y="1" width="13" height="12" fill="#111"/><line x1="1" y1="13" x2="13" y2="1" stroke="#ee1c1c" stroke-width="1.6"/></svg>
<div class="a" style="left:1600px;top:232px;width:215px;height:23px;border:1px solid #2e2e2e;background:linear-gradient(90deg,#e8112a 0%,#f08a20 9%,#f2e040 18%,#8cc840 27%,#30a848 36%,#40b8a0 47%,#38a8d8 55%,#2050a8 66%,#403090 75%,#9a3890 84%,#e02880 92%,#e8112a 100%)"></div>
<div class="a" style="left:1601px;top:233px;width:213px;height:21px;background:linear-gradient(180deg,rgba(255,255,255,0.95) 0%,rgba(255,255,255,0) 40%,rgba(0,0,0,0) 58%,rgba(0,0,0,0.95) 100%)"></div>
<div class="a" style="left:1593px;top:261px;width:240px;height:9px;background:#535353;border-top:1px solid #3a3a3a;border-bottom:1px solid #3a3a3a"></div>
<div class="a" style="left:1704px;top:263px;width:17px;height:4px;background:repeating-linear-gradient(90deg,#3a3a3a 0 1px,transparent 1px 2px)"></div>
<!-- CHARACTER PANEL -->
<div class="a" style="left:1593px;top:270px;width:243px;height:668px;background:#535353;border-radius:4px 4px 0 0;box-shadow:0 0 3px rgba(0,0,0,0.25)"></div>
<div class="a" style="left:1593px;top:270px;width:243px;height:40px;background:#434343;border-radius:4px 4px 0 0"></div>
<div class="a" style="left:1593px;top:284px;width:243px;height:1px;background:#3a3a3a"></div>
<svg style="left:1804px;top:274px" width="12" height="8"><path d="M4.5 1.2 L2 3.5 L4.5 5.8 M8.5 1.2 L6 3.5 L8.5 5.8" fill="none" stroke="#d0d0d0" stroke-width="1.4"/></svg>
<svg style="left:1824px;top:274px" width="9" height="9"><path d="M1.5 1.5 L6.5 6.5 M6.5 1.5 L1.5 6.5" stroke="#c4c4c4" stroke-width="1.9"/></svg>
<div class="a" style="left:1594px;top:285px;width:48px;height:25px;background:#535353"></div>
<div class="a" style="left:1677px;top:285px;width:1px;height:25px;background:#3c3c3c"></div>
<div class="a" style="left:1746px;top:285px;width:1px;height:25px;background:#3c3c3c"></div>
<div class="a" style="left:1788px;top:285px;width:1px;height:25px;background:#3c3c3c"></div>
<svg style="left:1598px;top:292px" width="8" height="12"><path d="M1.5 4 L4 1.5 L6.5 4 M1.5 7.5 L4 10 L6.5 7.5" fill="none" stroke="#c8c8c8" stroke-width="1"/></svg>
<div class="t" style="left:1609px;top:291px;color:#f0f0f0">字符</div>
<div class="t" style="left:1651px;top:291px;color:#a8a8a8">段落</div>
<div class="t" style="left:1687px;top:291px;color:#a8a8a8">路径查找器</div>
<div class="t" style="left:1755px;top:291px;color:#a8a8a8">对齐</div>
<svg style="left:1819px;top:294px" width="11" height="8"><g fill="#d8d8d8"><rect y="0" width="10" height="1"/><rect y="2" width="10" height="1"/><rect y="4" width="10" height="1"/><rect y="6" width="10" height="1"/></g></svg>
<!-- font family -->
<div class="fld" style="left:1599px;top:317px;width:220px;height:20px;background:#434343;border-color:#4f4f4f;border-radius:3px"></div>
<div class="a" style="left:1800px;top:318px;width:1px;height:18px;background:#4f4f4f"></div>
<svg style="left:1601px;top:320px" width="18" height="14"><circle cx="7" cy="5.5" r="3.6" fill="none" stroke="#bdbdbd" stroke-width="1.2"/><line x1="4.5" y1="8" x2="1.5" y2="11.5" stroke="#bdbdbd" stroke-width="1.3"/><path d="M12 9 L16 9 L14 11 Z" fill="#bdbdbd"/></svg>
<div class="t" style="left:1626px;top:322px;font-size:11px;color:#f0f0f0;font-weight:bold">思源黑体 <span style="font-family:'Liberation Mono',monospace">CN</span></div>
<svg style="left:1804px;top:324px" width="10" height="8"><path d="M1.5 1.5 L4.5 4.5 L7.5 1.5" fill="none" stroke="#e0e0e0" stroke-width="1.3"/></svg>
<div class="fld" style="left:1599px;top:343px;width:231px;height:20px;background:#434343;border-color:#4f4f4f;border-radius:3px"></div>
<div class="a" style="left:1811px;top:344px;width:1px;height:18px;background:#4f4f4f"></div>
<div class="t" style="left:1605px;top:348px;font-size:11px;color:#f0f0f0;font-weight:bold;font-family:'Liberation Mono',monospace;letter-spacing:-0.5px">Medium</div>
<svg style="left:1815px;top:350px" width="10" height="8"><path d="M1.5 1.5 L4.5 4.5 L7.5 1.5" fill="none" stroke="#e0e0e0" stroke-width="1.3"/></svg>
<div class="a" style="left:1599px;top:369px;width:231px;height:1px;background:#474747"></div>
<div class="a" style="left:1599px;top:454px;width:231px;height:1px;background:#474747"></div>
<div class="a" style="left:1599px;top:513px;width:231px;height:1px;background:#474747"></div>
<div class="a" style="left:1599px;top:546px;width:231px;height:1px;background:#474747"></div>
<div class="a" style="left:1599px;top:572px;width:231px;height:1px;background:#474747"></div>
<div class="fld" style="left:1620px;top:376px;width:80px;height:20px;background:#4a4a4a;border-color:#5c5c5c;border-radius:3px"></div>
<div class="a" style="left:1638px;top:377px;width:44px;height:18px;background:#434343;border-left:1px solid #444;border-right:1px solid #444"></div>
<svg style="left:1624px;top:378px" width="10" height="16"><path d="M1.5 5 L5 1.8 L8.5 5 M1.5 11 L5 14.2 L8.5 11" fill="none" stroke="#e0e0e0" stroke-width="1.2"/></svg>
<div class="t" style="left:1641px;top:380px;font-size:11px;color:#f0f0f0;font-family:'Liberation Mono',monospace;">36 pt</div>
<svg style="left:1686px;top:383px" width="10" height="8"><path d="M1.5 1.5 L4.5 4.5 L7.5 1.5" fill="none" stroke="#e0e0e0" stroke-width="1.3"/></svg>
<div class="fld" style="left:1749px;top:376px;width:80px;height:20px;background:#4a4a4a;border-color:#5c5c5c;border-radius:3px"></div>
<div class="a" style="left:1767px;top:377px;width:44px;height:18px;background:#434343;border-left:1px solid #444;border-right:1px solid #444"></div>
<svg style="left:1753px;top:378px" width="10" height="16"><path d="M1.5 5 L5 1.8 L8.5 5 M1.5 11 L5 14.2 L8.5 11" fill="none" stroke="#e0e0e0" stroke-width="1.2"/></svg>
<div class="t" style="left:1770px;top:380px;font-size:11px;color:#f0f0f0;font-family:'Liberation Mono',monospace;font-size:10px;letter-spacing:-0.3px">(43.2 ]</div>
<svg style="left:1815px;top:383px" width="10" height="8"><path d="M1.5 1.5 L4.5 4.5 L7.5 1.5" fill="none" stroke="#e0e0e0" stroke-width="1.3"/></svg>
<div class="fld" style="left:1620px;top:402px;width:80px;height:20px;background:#4a4a4a;border-color:#5c5c5c;border-radius:3px"></div>
<div class="a" style="left:1638px;top:403px;width:44px;height:18px;background:#434343;border-left:1px solid #444;border-right:1px solid #444"></div>
<svg style="left:1624px;top:404px" width="10" height="16"><path d="M1.5 5 L5 1.8 L8.5 5 M1.5 11 L5 14.2 L8.5 11" fill="none" stroke="#e0e0e0" stroke-width="1.2"/></svg>
<div class="t" style="left:1641px;top:406px;font-size:11px;color:#f0f0f0;">100%</div>
<svg style="left:1686px;top:409px" width="10" height="8"><path d="M1.5 1.5 L4.5 4.5 L7.5 1.5" fill="none" stroke="#e0e0e0" stroke-width="1.3"/></svg>
<div class="fld" style="left:1749px;top:402px;width:80px;height:20px;background:#4a4a4a;border-color:#5c5c5c;border-radius:3px"></div>
<div class="a" style="left:1767px;top:403px;width:44px;height:18px;background:#434343;border-left:1px solid #444;border-right:1px solid #444"></div>
<svg style="left:1753px;top:404px" width="10" height="16"><path d="M1.5 5 L5 1.8 L8.5 5 M1.5 11 L5 14.2 L8.5 11" fill="none" stroke="#e0e0e0" stroke-width="1.2"/></svg>
<div class="t" style="left:1770px;top:406px;font-size:11px;color:#f0f0f0;">100%</div>
<svg style="left:1815px;top:409px" width="10" height="8"><path d="M1.5 1.5 L4.5 4.5 L7.5 1.5" fill="none" stroke="#e0e0e0" stroke-width="1.3"/></svg>
<div class="fld" style="left:1620px;top:428px;width:80px;height:20px;background:#4a4a4a;border-color:#5c5c5c;border-radius:3px"></div>
<div class="a" style="left:1638px;top:429px;width:44px;height:18px;background:#434343;border-left:1px solid #444;border-right:1px solid #444"></div>
<svg style="left:1624px;top:430px" width="10" height="16"><path d="M1.5 5 L5 1.8 L8.5 5 M1.5 11 L5 14.2 L8.5 11" fill="none" stroke="#e0e0e0" stroke-width="1.2"/></svg>
<div class="t" style="left:1641px;top:432px;font-size:11px;color:#f0f0f0;">自动</div>
<svg style="left:1686px;top:435px" width="10" height="8"><path d="M1.5 1.5 L4.5 4.5 L7.5 1.5" fill="none" stroke="#e0e0e0" stroke-width="1.3"/></svg>
<div class="fld" style="left:1749px;top:428px;width:80px;height:20px;background:#4a4a4a;border-color:#5c5c5c;border-radius:3px"></div>
<div class="a" style="left:1767px;top:429px;width:44px;height:18px;background:#434343;border-left:1px solid #444;border-right:1px solid #444"></div>
<svg style="left:1753px;top:430px" width="10" height="16"><path d="M1.5 5 L5 1.8 L8.5 5 M1.5 11 L5 14.2 L8.5 11" fill="none" stroke="#e0e0e0" stroke-width="1.2"/></svg>
<div class="t" style="left:1770px;top:432px;font-size:11px;color:#f0f0f0;">−10</div>
<svg style="left:1815px;top:435px" width="10" height="8"><path d="M1.5 1.5 L4.5 4.5 L7.5 1.5" fill="none" stroke="#e0e0e0" stroke-width="1.3"/></svg>
<div class="fld" style="left:1620px;top:461px;width:80px;height:20px;background:#4a4a4a;border-color:#5c5c5c;border-radius:3px"></div>
<div class="a" style="left:1638px;top:462px;width:44px;height:18px;background:#434343;border-left:1px solid #444;border-right:1px solid #444"></div>
<svg style="left:1624px;top:463px" width="10" height="16"><path d="M1.5 5 L5 1.8 L8.5 5 M1.5 11 L5 14.2 L8.5 11" fill="none" stroke="#e0e0e0" stroke-width="1.2"/></svg>
<div class="t" style="left:1641px;top:465px;font-size:11px;color:#f0f0f0;">0%</div>
<svg style="left:1686px;top:468px" width="10" height="8"><path d="M1.5 1.5 L4.5 4.5 L7.5 1.5" fill="none" stroke="#e0e0e0" stroke-width="1.3"/></svg>
<div class="fld" style="left:1620px;top:487px;width:80px;height:20px;background:#4a4a4a;border-color:#5c5c5c;border-radius:3px"></div>
<div class="a" style="left:1621px;top:488px;width:60px;height:18px;background:#4a4a4a;border-right:1px solid #444"></div>
<div class="t" style="left:1628px;top:491px;font-size:11.5px;color:#f0f0f0;">自动</div>
<svg style="left:1686px;top:494px" width="10" height="8"><path d="M1.5 1.5 L4.5 4.5 L7.5 1.5" fill="none" stroke="#e0e0e0" stroke-width="1.3"/></svg>
<div class="fld" style="left:1749px;top:487px;width:80px;height:20px;background:#4a4a4a;border-color:#5c5c5c;border-radius:3px"></div>
<div class="a" style="left:1750px;top:488px;width:60px;height:18px;background:#4a4a4a;border-right:1px solid #444"></div>
<div class="t" style="left:1757px;top:491px;font-size:11.5px;color:#f0f0f0;">自动</div>
<svg style="left:1815px;top:494px" width="10" height="8"><path d="M1.5 1.5 L4.5 4.5 L7.5 1.5" fill="none" stroke="#e0e0e0" stroke-width="1.3"/></svg>
<div class="fld" style="left:1620px;top:520px;width:80px;height:20px;background:#4a4a4a;border-color:#5c5c5c;border-radius:3px"></div>
<div class="a" style="left:1638px;top:521px;width:44px;height:18px;background:#434343;border-left:1px solid #444;border-right:1px solid #444"></div>
<svg style="left:1624px;top:522px" width="10" height="16"><path d="M1.5 5 L5 1.8 L8.5 5 M1.5 11 L5 14.2 L8.5 11" fill="none" stroke="#e0e0e0" stroke-width="1.2"/></svg>
<div class="t" style="left:1641px;top:524px;font-size:11px;color:#f0f0f0;font-family:'Liberation Mono',monospace;">−10 pt</div>
<svg style="left:1686px;top:527px" width="10" height="8"><path d="M1.5 1.5 L4.5 4.5 L7.5 1.5" fill="none" stroke="#e0e0e0" stroke-width="1.3"/></svg>
<div class="fld" style="left:1749px;top:520px;width:80px;height:20px;background:#4a4a4a;border-color:#5c5c5c;border-radius:3px"></div>
<div class="a" style="left:1767px;top:521px;width:44px;height:18px;background:#434343;border-left:1px solid #444;border-right:1px solid #444"></div>
<svg style="left:1753px;top:522px" width="10" height="16"><path d="M1.5 5 L5 1.8 L8.5 5 M1.5 11 L5 14.2 L8.5 11" fill="none" stroke="#e0e0e0" stroke-width="1.2"/></svg>
<div class="t" style="left:1770px;top:524px;font-size:11px;color:#f0f0f0;">0°</div>
<svg style="left:1815px;top:527px" width="10" height="8"><path d="M1.5 1.5 L4.5 4.5 L7.5 1.5" fill="none" stroke="#e0e0e0" stroke-width="1.3"/></svg>
<div class="fld" style="left:1599px;top:579px;width:101px;height:20px;background:#4a4a4a;border-color:#5c5c5c;border-radius:3px"></div>
<div class="t" style="left:1606px;top:583px;font-size:12px;color:#f0f0f0;letter-spacing:0.5px">英语：美国</div>
<svg style="left:1686px;top:586px" width="10" height="8"><path d="M1.5 1.5 L4.5 4.5 L7.5 1.5" fill="none" stroke="#e0e0e0" stroke-width="1.3"/></svg>
<div class="a" style="left:1749px;top:579px;width:80px;height:20px;background:#575757;border-radius:3px"></div>
<div class="t" style="left:1756px;top:584px;font-size:11px;color:#6e6e6e">锐化</div>
<svg style="left:1815px;top:586px" width="10" height="8"><path d="M1.5 1.5 L4.5 4.5 L7.5 1.5" fill="none" stroke="#666" stroke-width="1.3"/></svg>
<!-- char icons -->
<svg style="left:1596px;top:374px" width="30" height="220" font-family="Liberation Serif" fill="#c8c8c8">
<text x="3" y="19.5" font-size="9" font-weight="bold">T</text><text x="7.5" y="19.5" font-size="18" font-weight="bold">T</text>
<path d="M6 32 V45 M3.5 35 L6 31.5 L8.5 35 M3.5 42 L6 45.5 L8.5 42" fill="none" stroke="#c8c8c8" stroke-width="1.1"/>
<text x="8.5" y="45" font-size="18" font-weight="bold">T</text>
<text x="3" y="66" font-size="12" font-family="Liberation Sans" letter-spacing="-2">V/A</text>
<path d="M22 72 H13 M15.5 69.5 L13 72 L15.5 74.5" fill="none" stroke="#c8c8c8" stroke-width="1.1"/>
<rect x="3.5" y="88" width="14" height="9" fill="none" stroke="#9a9a9a" stroke-width="0.8" stroke-dasharray="1 1"/>
<text x="5" y="96" font-size="9" font-family="Liberation Sans">あ</text>
<path d="M2 101 H9 M6.5 99 L9 101 L6.5 103 M20 101 H13 M15.5 99 L13 101 L15.5 103" fill="none" stroke="#c8c8c8" stroke-width="1"/>
<rect x="5.5" y="114" width="12" height="9" fill="none" stroke="#9a9a9a" stroke-width="0.8" stroke-dasharray="1 1"/>
<text x="6" y="122" font-size="9" font-family="Liberation Sans">あ</text>
<path d="M2 127 H10 M7.5 125 L10 127 L7.5 129 M4 114 V127" fill="none" stroke="#c8c8c8" stroke-width="1"/>
<text x="2" y="160" font-size="13" font-family="Liberation Sans">A</text><text x="10" y="152" font-size="8" font-family="Liberation Sans">a</text>
<path d="M2 162.5 H10 M14 163 V155 M12 157 L14 155 L16 157" fill="none" stroke="#c8c8c8" stroke-width="1"/>
</svg>
<svg style="left:1725px;top:374px" width="30" height="220" font-family="Liberation Serif" fill="#c8c8c8">
<text x="8" y="12" font-size="9">A</text><text x="8" y="22" font-size="9">A</text>
<path d="M4 9 V21 M2 11 L4 9 L6 11 M2 19 L4 21 L6 19" fill="none" stroke="#c8c8c8" stroke-width="1"/>
<line x1="7" y1="13" x2="19" y2="13" stroke="#c8c8c8" stroke-width="0.6"/>
<text x="4" y="41" font-size="18" font-weight="bold">T</text>
<path d="M3 45 H19 M5.5 43 L3 45 L5.5 47 M16.5 43 L19 45 L16.5 47" fill="none" stroke="#c8c8c8" stroke-width="1.1"/>
<rect x="3" y="57" width="17" height="11" fill="#c8c8c8"/>
<text x="3.5" y="67" font-size="11" font-family="Liberation Sans" fill="#535353" letter-spacing="-1.5">VA</text>
<path d="M3 72 H20 M5.5 70 L3 72 L5.5 74 M17.5 70 L20 72 L17.5 74" fill="none" stroke="#c8c8c8" stroke-width="1.1"/>
<rect x="9.5" y="114" width="12" height="9" fill="none" stroke="#9a9a9a" stroke-width="0.8" stroke-dasharray="1 1"/>
<text x="10" y="122" font-size="9" font-family="Liberation Sans">あ</text>
<path d="M20 127 H12 M14.5 125 L12 127 L14.5 129 M18 114 V127" fill="none" stroke="#c8c8c8" stroke-width="1"/>
<circle cx="12" cy="156" r="7.5" fill="none" stroke="#c8c8c8" stroke-width="1.1"/>
<text x="7.5" y="161" font-size="11" font-weight="bold">T</text>
<path d="M12 148.5 L14.5 147 M12 148.5 L14.5 150" fill="none" stroke="#c8c8c8" stroke-width="1"/>
</svg>
<div class="t" style="left:1603px;top:553px;font-family:'Liberation Serif',serif;font-size:14px;font-weight:bold;color:#c8c8c8;letter-spacing:-1px">TT</div>
<div class="t" style="left:1633px;top:553px;font-family:'Liberation Serif',serif;font-size:14px;font-weight:bold;color:#c8c8c8;letter-spacing:-1px">T<span style="font-size:11px">r</span></div>
<div class="t" style="left:1693px;top:553px;font-family:'Liberation Serif',serif;font-size:14px;font-weight:bold;color:#c8c8c8">T<span style="font-size:7px;vertical-align:5px">1</span></div>
<div class="t" style="left:1721px;top:553px;font-family:'Liberation Serif',serif;font-size:14px;font-weight:bold;color:#c8c8c8">T<span style="font-size:7px;vertical-align:-3px">1</span></div>
<div class="t" style="left:1783px;top:553px;font-family:'Liberation Serif',serif;font-size:14px;font-weight:bold;color:#c8c8c8;text-decoration:underline">T</div>
<div class="t" style="left:1812px;top:553px;font-family:'Liberation Serif',serif;font-size:14px;font-weight:bold;color:#c8c8c8;text-decoration:line-through">T</div>
<svg style="left:1727px;top:581px" width="16" height="14" font-family="Liberation Sans" fill="#c8c8c8"><text x="1" y="8" font-size="8">a</text><text x="6" y="13" font-size="11">a</text></svg>

<!-- APPEARANCE PANEL -->
<div class="a" style="left:1593px;top:605px;width:243px;height:1px;background:#3a3a3a"></div>
<div class="a" style="left:1593px;top:606px;width:243px;height:29px;background:#434343;border-top:1px solid #3a3a3a"></div>
<div class="a" style="left:1594px;top:607px;width:42px;height:28px;background:#535353"></div>
<div class="t" style="left:1603px;top:615px;color:#f0f0f0">外观</div>
<svg style="left:1819px;top:618px" width="11" height="8"><g fill="#d8d8d8"><rect y="0" width="10" height="1"/><rect y="2" width="10" height="1"/><rect y="4" width="10" height="1"/><rect y="6" width="10" height="1"/></g></svg>
<div class="a" style="left:1599px;top:641px;width:231px;height:269px;border:1px solid #5a5a5a;border-radius:3px"></div>
<div class="a" style="left:1600px;top:666px;width:229px;height:1px;background:#5a5a5a"></div>
<div class="a" style="left:1600px;top:691px;width:229px;height:1px;background:#5a5a5a"></div>
<div class="a" style="left:1600px;top:716px;width:229px;height:1px;background:#5a5a5a"></div>
<div class="a" style="left:1600px;top:741px;width:229px;height:1px;background:#5a5a5a"></div>
<div class="a" style="left:1600px;top:766px;width:229px;height:1px;background:#5a5a5a"></div>
<div class="a" style="left:1600px;top:791px;width:229px;height:1px;background:#5a5a5a"></div>
<div class="a" style="left:1624px;top:667px;width:1px;height:124px;background:#333"></div>
<svg style="left:1602px;top:644px" width="22" height="22"><rect x="0.5" y="0.5" width="19" height="19" fill="#fff" stroke="#222" stroke-width="1"/><rect x="3" y="3" width="14" height="14" fill="#eb6ca4"/></svg>
<div class="t" style="left:1650px;top:648px;color:#f0f0f0;font-size:12px">未选择对象</div>
<svg style="left:1603px;top:674px" width="18" height="12"><path d="M1 5.5 C4 1 14 1 17 5.5 C14 10 4 10 1 5.5 Z" fill="#c8c8c8"/><circle cx="9" cy="5.5" r="3" fill="#535353"/><circle cx="9" cy="5.5" r="1.5" fill="#c8c8c8"/></svg>
<svg style="left:1603px;top:724px" width="18" height="12"><path d="M1 5.5 C4 1 14 1 17 5.5 C14 10 4 10 1 5.5 Z" fill="#c8c8c8"/><circle cx="9" cy="5.5" r="3" fill="#535353"/><circle cx="9" cy="5.5" r="1.5" fill="#c8c8c8"/></svg>
<svg style="left:1603px;top:699px" width="18" height="12"><path d="M1 5.5 C4 1 14 1 17 5.5 C14 10 4 10 1 5.5 Z" fill="#6a6a6a"/><circle cx="9" cy="5.5" r="3" fill="#535353"/><circle cx="9" cy="5.5" r="1.5" fill="#6a6a6a"/></svg>
<svg style="left:1603px;top:749px" width="18" height="12"><path d="M1 5.5 C4 1 14 1 17 5.5 C14 10 4 10 1 5.5 Z" fill="#6a6a6a"/><circle cx="9" cy="5.5" r="3" fill="#535353"/><circle cx="9" cy="5.5" r="1.5" fill="#6a6a6a"/></svg>
<svg style="left:1603px;top:774px" width="18" height="12"><path d="M1 5.5 C4 1 14 1 17 5.5 C14 10 4 10 1 5.5 Z" fill="#6a6a6a"/><circle cx="9" cy="5.5" r="3" fill="#535353"/><circle cx="9" cy="5.5" r="1.5" fill="#6a6a6a"/></svg>
<svg style="left:1631px;top:675px" width="10" height="8"><path d="M1.5 1.5 L4.5 4.5 L7.5 1.5" fill="none" stroke="#e0e0e0" stroke-width="1.3"/></svg>
<svg style="left:1631px;top:725px" width="10" height="8"><path d="M1.5 1.5 L4.5 4.5 L7.5 1.5" fill="none" stroke="#e0e0e0" stroke-width="1.3"/></svg>
<div class="t" style="left:1650px;top:673px;color:#e8e8e8">描边：</div>
<div class="a" style="left:1650px;top:686px;width:33px;height:1px;border-top:1px dotted #aaa"></div>
<svg style="left:1692px;top:670px" width="19" height="19"><rect x="0.5" y="0.5" width="17" height="17" fill="#fff" stroke="#222" stroke-width="1"/><rect x="2.5" y="2.5" width="13" height="13" fill="none" stroke="#222" stroke-width="0.8"/><line x1="4" y1="14" x2="14" y2="4" stroke="#d41024" stroke-width="1.8"/></svg>
<div class="t" style="left:1650px;top:723px;color:#e8e8e8">填色：</div>
<svg style="left:1692px;top:720px" width="19" height="19"><rect x="0.5" y="0.5" width="17" height="17" fill="#fff" stroke="#222" stroke-width="1"/><rect x="2.5" y="2.5" width="13" height="13" fill="#eb6ca4" stroke="#222" stroke-width="0.8"/></svg>
<div class="t" style="left:1673px;top:698px;color:#e8e8e8">不透明度：默认值</div>
<div class="a" style="left:1673px;top:711px;width:56px;height:1px;border-top:1px dotted #aaa"></div>
<div class="t" style="left:1673px;top:748px;color:#e8e8e8">不透明度：默认值</div>
<div class="a" style="left:1673px;top:761px;width:56px;height:1px;border-top:1px dotted #aaa"></div>
<div class="t" style="left:1650px;top:773px;color:#e8e8e8">不透明度：默认值</div>
<div class="a" style="left:1650px;top:786px;width:56px;height:1px;border-top:1px dotted #aaa"></div>
<!-- footer -->
<svg style="left:1603px;top:911px" width="210" height="18">
<rect x="3.5" y="3.5" width="10" height="10" fill="none" stroke="#d0d0d0" stroke-width="1.6"/>
<rect x="29.5" y="3.5" width="10" height="10" fill="#b8b8b8" stroke="#d0d0d0" stroke-width="1.4"/>
<text x="54" y="13" font-family="Liberation Serif" font-style="italic" font-size="13" fill="#c8c8c8">fx</text><path d="M67 13 L70 13 L68.5 14.5 Z" fill="#c8c8c8"/>
<circle cx="146.5" cy="8.5" r="5" fill="none" stroke="#d0d0d0" stroke-width="1.6"/><line x1="143" y1="5" x2="150" y2="12" stroke="#d0d0d0" stroke-width="1.6"/>
<path d="M168 5 H178 V14 H171 V9 H168 Z" fill="#6a6a6a"/>
<path d="M194 5 H203 M197 3.5 H200 M195 6 V14 H202 V6 M197.5 7 V13 M199.5 7 V13" fill="none" stroke="#6a6a6a" stroke-width="1"/>
</svg>
<div class="a" style="left:1593px;top:929px;width:243px;height:9px;background:#535353;border-top:1px solid #3a3a3a;border-bottom:1px solid #3a3a3a"></div>
<div class="a" style="left:1705px;top:931px;width:17px;height:4px;background:repeating-linear-gradient(90deg,#2e2e2e 0 1px,transparent 1px 2px)"></div>
</body></html>
